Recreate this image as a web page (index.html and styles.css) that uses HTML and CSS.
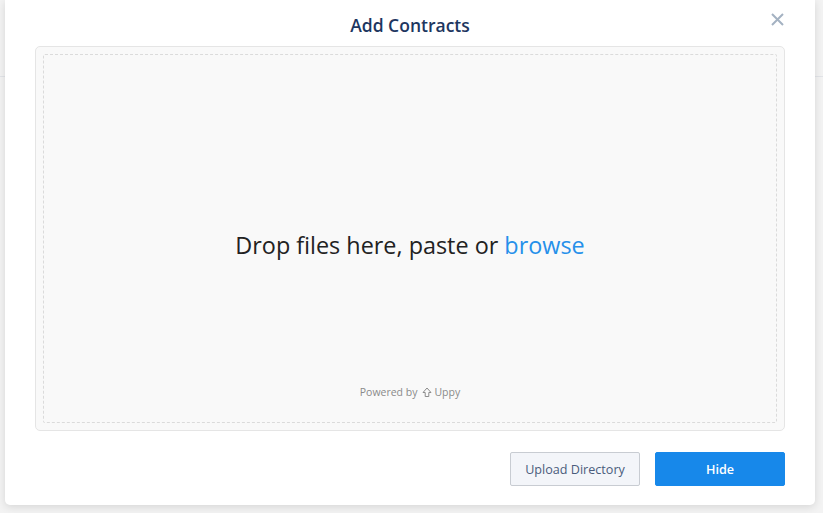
FILE: index.html
```html
<!DOCTYPE html>
<html>
<head>
<meta charset="utf-8">
<link rel="stylesheet" href="styles.css">
</head>
<body>
<div class="backdrop">
  <div class="bg-line"></div>
  <div class="modal">
    <div class="modal-header">
      <h1 class="title">Add Contracts</h1>
      <button class="close" aria-label="Close">
        <svg width="13" height="13" viewBox="0 0 13 13"><path d="M1 1 L12 12 M12 1 L1 12" stroke="#a4b2c2" stroke-width="2" fill="none"/></svg>
      </button>
    </div>
    <div class="dropzone">
      <div class="dropzone-inner">
        <div class="drop-main">
          <span class="drop-text">Drop files here, paste or <span class="browse">browse</span></span>
        </div>
        <div class="powered">Powered by <svg class="uppy-icon" width="10" height="11" viewBox="0 0 10 11"><path d="M5 1 L9 5.5 H6.8 V9.5 H3.2 V5.5 H1 Z" stroke="#8c8c8c" stroke-width="1" fill="none" stroke-linejoin="round"/></svg>Uppy</div>
      </div>
    </div>
    <div class="modal-footer">
      <button class="btn btn-secondary">Upload Directory</button>
      <button class="btn btn-primary">Hide</button>
    </div>
  </div>
</div>
</body>
</html>
```
FILE: styles.css
```css
html, body {
  margin: 0;
  padding: 0;
}
body {
  width: 823px;
  height: 513px;
  overflow: hidden;
  background: #f3f4f5;
  font-family: "Open Sans", "Noto Sans", sans-serif;
}
.backdrop {
  position: relative;
  width: 823px;
  height: 513px;
  background: #f3f3f3;
}
.bg-line {
  position: absolute;
  left: 0;
  right: 0;
  top: 76px;
  height: 1px;
  background: #e2e4e8;
}
.modal {
  position: absolute;
  left: 5px;
  top: 0;
  width: 810px;
  height: 505px;
  background: #ffffff;
  border-radius: 0 0 5px 5px;
  box-shadow: 0 2px 8px rgba(0, 0, 0, 0.12);
  display: flex;
  flex-direction: column;
  box-sizing: border-box;
}
.modal-header {
  position: relative;
  height: 46px;
  display: flex;
  align-items: center;
  justify-content: center;
}
.title {
  margin: 0;
  padding-top: 3px;
  font-family: "Open Sans", "Noto Sans", sans-serif;
  font-size: 17.5px;
  font-weight: 600;
  color: #1d3660;
}
.close {
  position: absolute;
  left: 766px;
  top: 13px;
  width: 13px;
  height: 13px;
  padding: 0;
  border: 0;
  background: none;
  display: block;
}
.close svg {
  display: block;
}
.dropzone {
  margin: 0 30px;
  height: 385px;
  box-sizing: border-box;
  border: 1px solid #e5e5e5;
  border-radius: 5px;
  background: #f9f9f9;
  padding: 7px;
  display: flex;
}
.dropzone-inner {
  flex: 1;
  border: 1px dashed #dbdbdb;
  border-radius: 2px;
  display: flex;
  flex-direction: column;
}
.drop-main {
  flex: 1;
  display: flex;
  align-items: center;
  justify-content: center;
  padding-top: 50px;
}
.drop-text {
  font-family: "Open Sans", "Noto Sans", sans-serif;
  font-size: 23.4px;
  color: #222222;
}
.browse {
  color: #2690ea;
}
.powered {
  height: 16px;
  line-height: 16px;
  margin-bottom: 22px;
  text-align: center;
  font-size: 10.5px;
  color: #8a8a8a;
  display: flex;
  justify-content: center;
  align-items: center;
  gap: 3px;
}
.uppy-icon {
  margin-left: 2px;
  margin-right: -1px;
}
.modal-footer {
  display: flex;
  justify-content: flex-end;
  gap: 15px;
  padding: 21px 30px 0 30px;
}
.btn {
  width: 130px;
  height: 34px;
  font-family: "Open Sans", "Noto Sans", sans-serif;
  font-size: 12.6px;
  border-radius: 2px;
  padding: 0;
  cursor: pointer;
}
.btn-secondary {
  background: #f3f5f9;
  border: 1px solid #c8ccd2;
  color: #4a5c7c;
}
.btn-primary {
  background: #1788ea;
  border: 1px solid #1788ea;
  color: #ffffff;
  font-weight: 600;
}
```
